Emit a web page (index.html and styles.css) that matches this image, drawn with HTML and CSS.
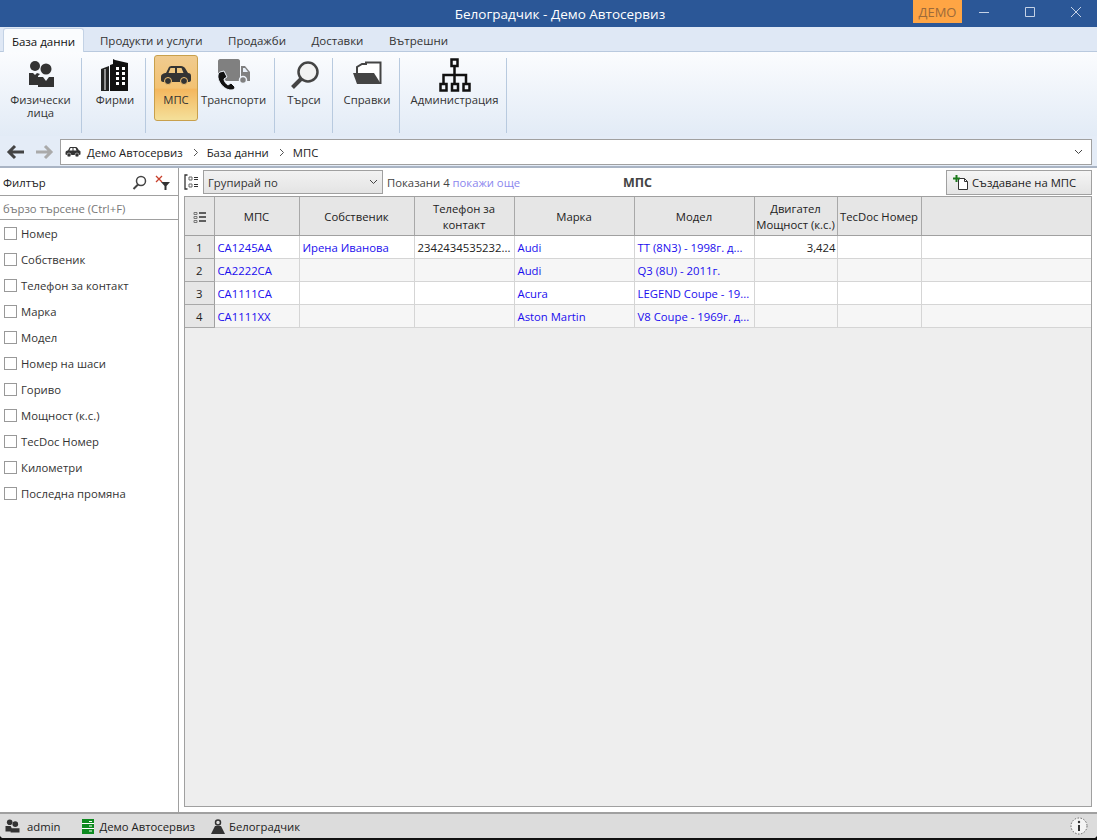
FILE: index.html

```html
<!DOCTYPE html>
<html lang="bg">
<head>
    <meta charset="UTF-8">
    <title>Белоградчик - Демо Автосервиз</title>
    <link rel="stylesheet" href="styles.css">
</head>
<body>
    <div class="window">
        <div class="titleBar">
            <span class="titleText">Белоградчик - Демо Автосервиз</span>
            <div class="titleRight">
                <span class="demo">ДЕМО</span>
                <div class="winButtons">
                    <svg width="46" height="27" viewBox="0 0 46 27"><path d="M18 12.500h10" stroke="#c5d2e6" fill="none"/></svg>
                    <svg width="46" height="27" viewBox="0 0 46 27"><path d="M18.500 7.500h9v9h-9z" stroke="#c5d2e6" fill="none"/></svg>
                    <svg width="46" height="27" viewBox="0 0 46 27"><path d="M18 7l10 10M28 7L18 17" stroke="#c5d2e6" fill="none"/></svg>
                </div>
            </div>
        </div>

        <div class="tabs">
            <div class="tab active">База данни</div>
            <div class="tab">Продукти и услуги</div>
            <div class="tab">Продажби</div>
            <div class="tab">Доставки</div>
            <div class="tab">Вътрешни</div>
        </div>

        <div class="ribbon">
            <div class="group groupPeople">
                <div class="rbtn">
                    <svg width="32" height="32" viewBox="0 0 32 32"><circle cx="10" cy="7" r="5" fill="#333"/><circle cx="21" cy="10" r="5.500" fill="#333"/><path d="M4 14h4l2 2 2-2 3 1-2 2v9H4z" fill="#333"/><path d="M13 18h5l3 4 3-4h5v10H13z" fill="#333"/></svg>
                    <span>Физически<br>лица</span>
                </div>
            </div>
            <div class="group groupFirms">
                <div class="rbtn">
                    <svg width="32" height="34" viewBox="0 0 32 34"><path d="M2 11l8-3v25H2z" fill="#222"/><path d="M6 11v21" stroke="#fff"/><path d="M11 7l3-1V1l2 1 13 3v28H11z" fill="#111"/><path d="M17 9h3v3h-3zM23 9h3v3h-3zM17 14h3v3h-3zM23 14h3v3h-3zM17 19h3v3h-3zM23 19h3v3h-3zM17 24h3v3h-3zM23 24h3v3h-3z" fill="#fff"/></svg>
                    <span>Фирми</span>
                </div>
            </div>
            <div class="group groupCars">
                <div class="rbtn selected">
                    <svg width="32" height="32" viewBox="0 0 32 32"><path d="M1 18c0-3 3-4 5-4l3-6c1-1 2-1 3-1h9c2 0 3 1 4 2l3 5c2 0 3 1 3 3v4c0 1-1 2-2 2H3c-1 0-2-1-2-2z" fill="#333"/><path d="M10.500 9h4.500v5H8.500zM17 9h4.500l2 5H17z" fill="#eec680"/><circle cx="8" cy="22" r="3.500" fill="#333" stroke="#f3c272"/><circle cx="24" cy="22" r="3.500" fill="#333" stroke="#f3c272"/></svg>
                    <span>МПС</span>
                </div>
                <div class="rbtn">
                    <svg width="32" height="32" viewBox="0 0 32 32"><path d="M0 2c0-1 1-2 2-2h18c1 0 2 1 2 2v20H8L0 14z" fill="#808080"/><path d="M23 7h4l5 6v9h-9z" fill="#808080"/><path d="M25 9h2l3 4h-5z" fill="#e8eff8"/><circle cx="25" cy="21" r="3.500" fill="#808080" stroke="#eef3fa" stroke-width="1.500"/><path d="M2 13c-2 1-3 4-1 9 3 6 8 9 12 9 2 0 4-1 4-3l-4-4-3 2c-2-1-4-4-4-6l3-2-3-6z" fill="#111" stroke="#eef3fa"/></svg>
                    <span>Транспорти</span>
                </div>
            </div>
            <div class="group groupSearch">
                <div class="rbtn">
                    <svg width="32" height="32" viewBox="0 0 32 32"><circle cx="20" cy="13" r="9.500" fill="#f2f2f2" stroke="#444" stroke-width="2.500"/><path d="M13 20l-8.500 8.500" stroke="#444" stroke-width="4" fill="none"/></svg>
                    <span>Търси</span>
                </div>
            </div>
            <div class="group groupReports">
                <div class="rbtn">
                    <svg width="32" height="32" viewBox="0 0 32 32"><path d="M6 14V8l5-3h4V3.500h14.500V25" fill="#fff" stroke="#444" stroke-width="2"/><path d="M2 14h21l7 11H6z" fill="#444"/></svg>
                    <span>Справки</span>
                </div>
            </div>
            <div class="group groupAdmin">
                <div class="rbtn">
                    <svg width="32" height="34" viewBox="0 0 32 34"><g fill="none" stroke="#111" stroke-width="2.500"><path d="M12.500 1.500h6v6.500h-6zM1.500 26h6v6.500h-6zM13 26h6v6.500h-6zM24.500 26h6v6.500h-6z"/><path d="M15.500 8v18M4.500 26v-9h22.500v9"/></g></svg>
                    <span>Администрация</span>
                </div>
            </div>
        </div>

        <div class="navRow">
            <svg class="navArrow" width="20" height="16" viewBox="0 0 20 16"><path d="M18 8H4M9 2L3 8l6 6" stroke="#444" stroke-width="3" fill="none"/></svg>
            <svg class="navArrow" width="20" height="16" viewBox="0 0 20 16"><path d="M2 8h14M11 2l6 6-6 6" stroke="#aaa" stroke-width="3" fill="none"/></svg>
            <div class="crumbs">
                <svg width="16" height="12" viewBox="0 0 32 24"><path d="M1 13c0-3 3-4 5-4l3-6c1-1 2-1 3-1h9c2 0 3 1 4 2l3 5c2 0 3 1 3 3v4c0 1-1 2-2 2H3c-1 0-2-1-2-2z" fill="#333"/><path d="M11 4h4v5H9zM17 4h4l2 5h-6z" fill="#fff"/><circle cx="8" cy="18" r="4" fill="#333" stroke="#fff"/><circle cx="24" cy="18" r="4" fill="#333" stroke="#fff"/></svg>
                <span class="crumb">Демо Автосервиз</span>
                <svg class="crumbSep" width="6" height="9" viewBox="0 0 6 9"><path d="M1 1l3.500 3.500L1 8" stroke="#555" fill="none"/></svg>
                <span class="crumb">База данни</span>
                <svg class="crumbSep" width="6" height="9" viewBox="0 0 6 9"><path d="M1 1l3.500 3.500L1 8" stroke="#555" fill="none"/></svg>
                <span class="crumb">МПС</span>
                <svg class="crumbDown" width="9" height="6" viewBox="0 0 9 6"><path d="M1 1l3.500 3.500L8 1" stroke="#444" fill="none"/></svg>
            </div>
        </div>

        <div class="content">
            <div class="sidebar">
                <div class="filterHead">
                    <span>Филтър</span>
                    <svg class="filterSearch" width="15" height="15" viewBox="0 0 15 15"><circle cx="9" cy="6" r="4.500" fill="none" stroke="#444" stroke-width="1.500"/><path d="M6 9.500l-4.500 4.500" stroke="#444" stroke-width="2"/></svg>
                    <svg width="16" height="15" viewBox="0 0 16 15"><path d="M1 1l6 6M7 1L1 7" stroke="#c8402c" stroke-width="1.300" fill="none"/><path d="M6 7h9l-3.500 4v4h-2v-4z" fill="#333"/></svg>
                </div>
                <div class="quickSearch">бързо търсене (Ctrl+F)</div>
                <div class="filterList">
                    <label class="check"><i></i>Номер</label>
                    <label class="check"><i></i>Собственик</label>
                    <label class="check"><i></i>Телефон за контакт</label>
                    <label class="check"><i></i>Марка</label>
                    <label class="check"><i></i>Модел</label>
                    <label class="check"><i></i>Номер на шаси</label>
                    <label class="check"><i></i>Гориво</label>
                    <label class="check"><i></i>Мощност (к.с.)</label>
                    <label class="check"><i></i>TecDoc Номер</label>
                    <label class="check"><i></i>Километри</label>
                    <label class="check"><i></i>Последна промяна</label>
                </div>
            </div>

            <div class="main">
                <div class="toolbar">
                    <svg class="groupIcon" width="15" height="16" viewBox="0 0 15 16"><path d="M3.500 1H1v14h2.500" stroke="#333" stroke-width="1.300" fill="none"/><path d="M5 3h3v3H5zM5 10h3v3H5z" fill="none" stroke="#666"/><path d="M10 3.500h4M10 5.500h4M10 10.500h4M10 12.500h4" stroke="#333"/></svg>
                    <div class="groupSelect">
                        <span>Групирай по</span>
                        <svg width="9" height="6" viewBox="0 0 9 6"><path d="M1 1l3.500 3.500L8 1" stroke="#444" fill="none"/></svg>
                    </div>
                    <span class="shown">Показани 4 <a class="more">покажи още</a></span>
                    <span class="gridTitle">МПС</span>
                    <div class="createBtn">
                        <svg width="16" height="15" viewBox="0 0 16 15"><path d="M5.500 3.500h6l3 3v8h-9z" fill="#fff" stroke="#333"/><path d="M11.500 3.500v3h3" fill="none" stroke="#333"/><path d="M0 3.500h7M3.500 0v7" stroke="#1c7a1c" stroke-width="2"/></svg>
                        <span>Създаване на МПС</span>
                    </div>
                </div>

                <div class="grid">
                    <table>
                        <colgroup>
                            <col class="colNum"><col class="colPlate"><col class="colOwner"><col class="colPhone"><col class="colMake"><col class="colModel"><col class="colPower"><col class="colTecdoc"><col>
                        </colgroup>
                        <thead>
                            <tr>
                                <th><svg width="13" height="13" viewBox="0 0 13 13"><path d="M1 1.500h3v2H1zM1 5.500h3v2H1zM1 9.500h3v2H1z" fill="none" stroke="#777"/><path d="M6 2h7M6 6h7M6 10h7" stroke="#333" stroke-width="1.500"/></svg></th>
                                <th>МПС</th>
                                <th>Собственик</th>
                                <th>Телефон за<br>контакт</th>
                                <th>Марка</th>
                                <th>Модел</th>
                                <th>Двигател<br>Мощност (к.с.)</th>
                                <th>TecDoc Номер</th>
                                <th></th>
                            </tr>
                        </thead>
                        <tbody>
                            <tr>
                                <td class="num">1</td>
                                <td class="link">СА1245АА</td>
                                <td class="link">Ирена Иванова</td>
                                <td>2342434535232...</td>
                                <td class="link">Audi</td>
                                <td class="link">TT (8N3) - 1998г. д...</td>
                                <td class="right">3,424</td>
                                <td></td>
                                <td></td>
                            </tr>
                            <tr>
                                <td class="num">2</td>
                                <td class="link">СА2222СА</td>
                                <td></td>
                                <td></td>
                                <td class="link">Audi</td>
                                <td class="link">Q3 (8U) - 2011г.</td>
                                <td></td>
                                <td></td>
                                <td></td>
                            </tr>
                            <tr>
                                <td class="num">3</td>
                                <td class="link">СА1111СА</td>
                                <td></td>
                                <td></td>
                                <td class="link">Acura</td>
                                <td class="link">LEGEND Coupe - 19...</td>
                                <td></td>
                                <td></td>
                                <td></td>
                            </tr>
                            <tr>
                                <td class="num">4</td>
                                <td class="link">СА1111ХХ</td>
                                <td></td>
                                <td></td>
                                <td class="link">Aston Martin</td>
                                <td class="link">V8 Coupe - 1969г. д...</td>
                                <td></td>
                                <td></td>
                                <td></td>
                            </tr>
                        </tbody>
                    </table>
                </div>
            </div>
        </div>

        <div class="statusBar">
            <div class="statusItem statusUser">
                <svg width="15" height="14" viewBox="0 0 32 30"><circle cx="10" cy="7" r="6" fill="#333"/><circle cx="22" cy="11" r="6" fill="#333"/><path d="M1 15h11l2 4v8H1zM12 20h19v9H12z" fill="#333"/></svg>
                <span>admin</span>
            </div>
            <div class="statusItem statusFirm">
                <svg width="12" height="15" viewBox="0 0 12 15"><path d="M0 0h12v15H0z" fill="#0d8a1f"/><path d="M0 4.500h12M0 9.500h12M7 2.500h3M7 7h3M7 12h3" stroke="#fff"/></svg>
                <span>Демо Автосервиз</span>
            </div>
            <div class="statusItem statusCity">
                <svg width="14" height="15" viewBox="0 0 14 15"><circle cx="7" cy="3.500" r="2.500" fill="none" stroke="#333" stroke-width="1.500"/><path d="M4 7h6l1 2 3 6H0l3-6z" fill="#333"/></svg>
                <span>Белоградчик</span>
            </div>
            <svg class="infoIcon" width="18" height="18" viewBox="0 0 18 18"><circle cx="9" cy="9" r="8" fill="#f4f4f4" stroke="#666" stroke-dasharray="1.500 1.500"/><circle cx="9" cy="5" r="1.200" fill="#333"/><path d="M9 8v6" stroke="#333" stroke-width="2"/></svg>
        </div>
    </div>
</body>
</html>
```

FILE: styles.css

```css
html, body {
    margin: 0;
    padding: 0;
    height: 100%;
    background: #111;
    overflow: hidden;
}

body {
    font-family: "Open Sans", "Noto Sans", sans-serif;
    font-size: 11.3px;
    color: #222;
}

.window {
    height: 838px;
    display: flex;
    flex-direction: column;
    background: #fff;
    border-radius: 0 0 4px 4px;
    overflow: hidden;
}

/* title bar */
.titleBar {
    height: 27px;
    flex: none;
    background: #2b5797;
    color: #fff;
    display: flex;
    align-items: center;
    justify-content: center;
    position: relative;
    font-size: 13.5px;
    padding-left: 23px;
}
.titleRight {
    position: absolute;
    top: 0;
    right: 0;
    display: flex;
}
.demo {
    width: 49px;
    height: 23px;
    line-height: 24px;
    text-align: center;
    background: #ffa544;
    color: #9c6a3a;
    font-size: 13px;
}
.winButtons {
    display: flex;
    margin-left: -1px;
    margin-right: -2px;
}

/* ribbon */
.tabs {
    height: 24px;
    flex: none;
    background: #dfe8f5;
    display: flex;
    padding-left: 3px;
    border-bottom: 1px solid #b9c9de;
    box-sizing: content-box;
}
.tab {
    padding: 6px 12.500px 0 13px;
    font-size: 11.5px;
    color: #333;
}
.tab.active {
    width: 81px;
    box-sizing: border-box;
    padding: 5px 0 0;
    margin-right: 3px;
    text-align: center;
    background: #fafcfe;
    border: 1px solid #c3d2e5;
    border-bottom: none;
    border-radius: 3px 3px 0 0;
    margin-top: 1px;
    height: 24px;
    color: #111;
}
.ribbon {
    height: 84px;
    flex: none;
    display: flex;
    background: linear-gradient(#fbfcfe, #e2ebf6);
    box-sizing: border-box;
    padding: 4px 0 0 0;
}
.group {
    display: flex;
    height: 75px;
    border-right: 1px solid #b8cadf;
    box-sizing: border-box;
    margin-top: 2px;
}
.groupPeople { width: 82px; }
.groupFirms { width: 64px; padding-left: 3px; }
.groupCars { width: 129px; padding: 0 5px 0 8px; }
.groupSearch { width: 58px; padding-left: 1px; }
.groupReports { width: 67px; padding-left: 2px; }
.groupAdmin { width: 107px; padding-left: 3px; }
.rbtn {
    flex: 1;
    display: flex;
    flex-direction: column;
    align-items: center;
    text-align: center;
    height: 66px;
    margin-top: -3px;
    padding-top: 3px;
    box-sizing: border-box;
    line-height: 13px;
    color: #333;
}
.rbtn svg {
    height: 34px;
    margin-bottom: 1px;
    flex: none;
}
.rbtn.selected {
    flex: none;
    width: 44px;
    padding-top: 2px;
    background: linear-gradient(#f0cb8f, #f3c272 50%, #f4b75e 52%, #f4e09a);
    border: 1px solid #c8a04c;
    border-radius: 3px;
}

/* address row */
.navRow {
    height: 28px;
    flex: none;
    display: flex;
    align-items: center;
    background: #e4ecf7;
    border-bottom: 2px solid #a9b4c4;
    padding: 2px 5px 0 6px;
    box-sizing: content-box;
}
.navArrow + .navArrow {
    margin-left: 8px;
    margin-right: 6px;
}
.crumbs {
    flex: 1;
    height: 24px;
    background: #fff;
    border: 1px solid #a0a0a0;
    display: flex;
    align-items: center;
    padding-left: 4px;
    padding-right: 8px;
}
.crumb {
    margin-left: 6px;
}
.crumbSep {
    margin-left: 10px;
    margin-right: 2px;
}
.crumbDown {
    margin-left: auto;
}

/* filter panel */
.content {
    flex: 1;
    display: flex;
    min-height: 0;
}
.sidebar {
    width: 178px;
    flex: none;
    border-right: 1px solid #a0a0a0;
    background: #fff;
}
.filterHead {
    height: 28px;
    display: flex;
    align-items: center;
    padding: 2px 7px 0 3px;
    box-sizing: border-box;
    border-bottom: 1px solid #a0a0a0;
}
.filterSearch {
    margin-left: auto;
    margin-right: 8px;
}
.quickSearch {
    height: 23px;
    line-height: 26px;
    padding-left: 3px;
    color: #777;
    border-bottom: 1px solid #a0a0a0;
}
.filterList {
    padding-left: 4px;
}
.check {
    display: flex;
    align-items: center;
    height: 26px;
    color: #333;
}
.check i {
    width: 11px;
    height: 11px;
    border: 1px solid #999;
    margin-right: 4px;
    background: #fff;
    flex: none;
}

/* grid area */
.main {
    flex: 1;
    display: flex;
    flex-direction: column;
    min-width: 0;
    padding: 0 5px 5px;
}
.toolbar {
    height: 28px;
    flex: none;
    display: flex;
    align-items: center;
    position: relative;
}
.groupIcon {
    margin-right: 4px;
}
.groupSelect {
    width: 180px;
    height: 24px;
    box-sizing: border-box;
    border: 1px solid #a0a0a0;
    background: linear-gradient(#f2f2f2, #e4e4e4);
    display: flex;
    align-items: center;
    justify-content: space-between;
    padding: 0 4px;
    color: #333;
}
.shown {
    margin-left: 4px;
    color: #444;
}
.more {
    color: #8b86ee;
}
.gridTitle {
    position: absolute;
    left: 439px;
    top: 6px;
    font-size: 12.500px;
    font-weight: 700;
    color: #444;
}
.createBtn {
    margin-left: auto;
    width: 146px;
    height: 25px;
    box-sizing: border-box;
    border: 1px solid #a0a0a0;
    background: linear-gradient(#f5f5f5, #e4e4e4);
    display: flex;
    align-items: center;
    padding-left: 6px;
    gap: 3px;
    color: #222;
}
.grid {
    flex: 1;
    border: 1px solid #a0a0a0;
    background: #eee;
    min-height: 0;
}
table {
    width: 100%;
    table-layout: fixed;
    border-collapse: collapse;
}
.colNum { width: 29px; }
.colPlate { width: 85px; }
.colOwner { width: 115px; }
.colPhone { width: 100px; }
.colMake { width: 120px; }
.colModel { width: 120px; }
.colPower { width: 83px; }
.colTecdoc { width: 84px; }
th {
    height: 36px;
    padding: 2px 0 0;
    background: #e6e6e6;
    font-weight: 400;
    line-height: 16px;
    color: #222;
    border-right: 1px solid #a8a8a8;
    border-bottom: 1px solid #a0a0a0;
    text-align: center;
    white-space: nowrap;
}
th:last-child {
    border-right: none;
}
th svg {
    display: block;
    margin: 0 auto;
}
td {
    height: 22px;
    padding: 0 2px 0 3px;
    background: #fff;
    border-right: 1px solid #d5d5d5;
    border-bottom: 1px solid #d5d5d5;
    white-space: nowrap;
    overflow: hidden;
}
td:last-child {
    border-right: none;
}
tbody tr:nth-child(even) td {
    background: #f6f6f6;
}
tbody tr td.num {
    background: #e6e6e6;
    text-align: center;
    border-right: 1px solid #a0a0a0;
    border-bottom: 1px solid #a8a8a8;
    padding: 0;
}
.link {
    color: #1a0dee;
}
td.right {
    text-align: right;
    padding-right: 1px;
}

/* status bar */
.statusBar {
    height: 26px;
    flex: none;
    background: #dcdcdc;
    border-top: 2px solid #a0a0a0;
    box-sizing: border-box;
    display: flex;
    align-items: center;
    padding-left: 5px;
    color: #222;
}
.statusItem {
    display: flex;
    align-items: center;
}
.statusUser { gap: 7px; margin-right: 22px; }
.statusFirm { gap: 5px; margin-right: 16px; }
.statusCity { gap: 4px; }
.infoIcon {
    margin-left: auto;
    margin-right: 9px;
}
```
